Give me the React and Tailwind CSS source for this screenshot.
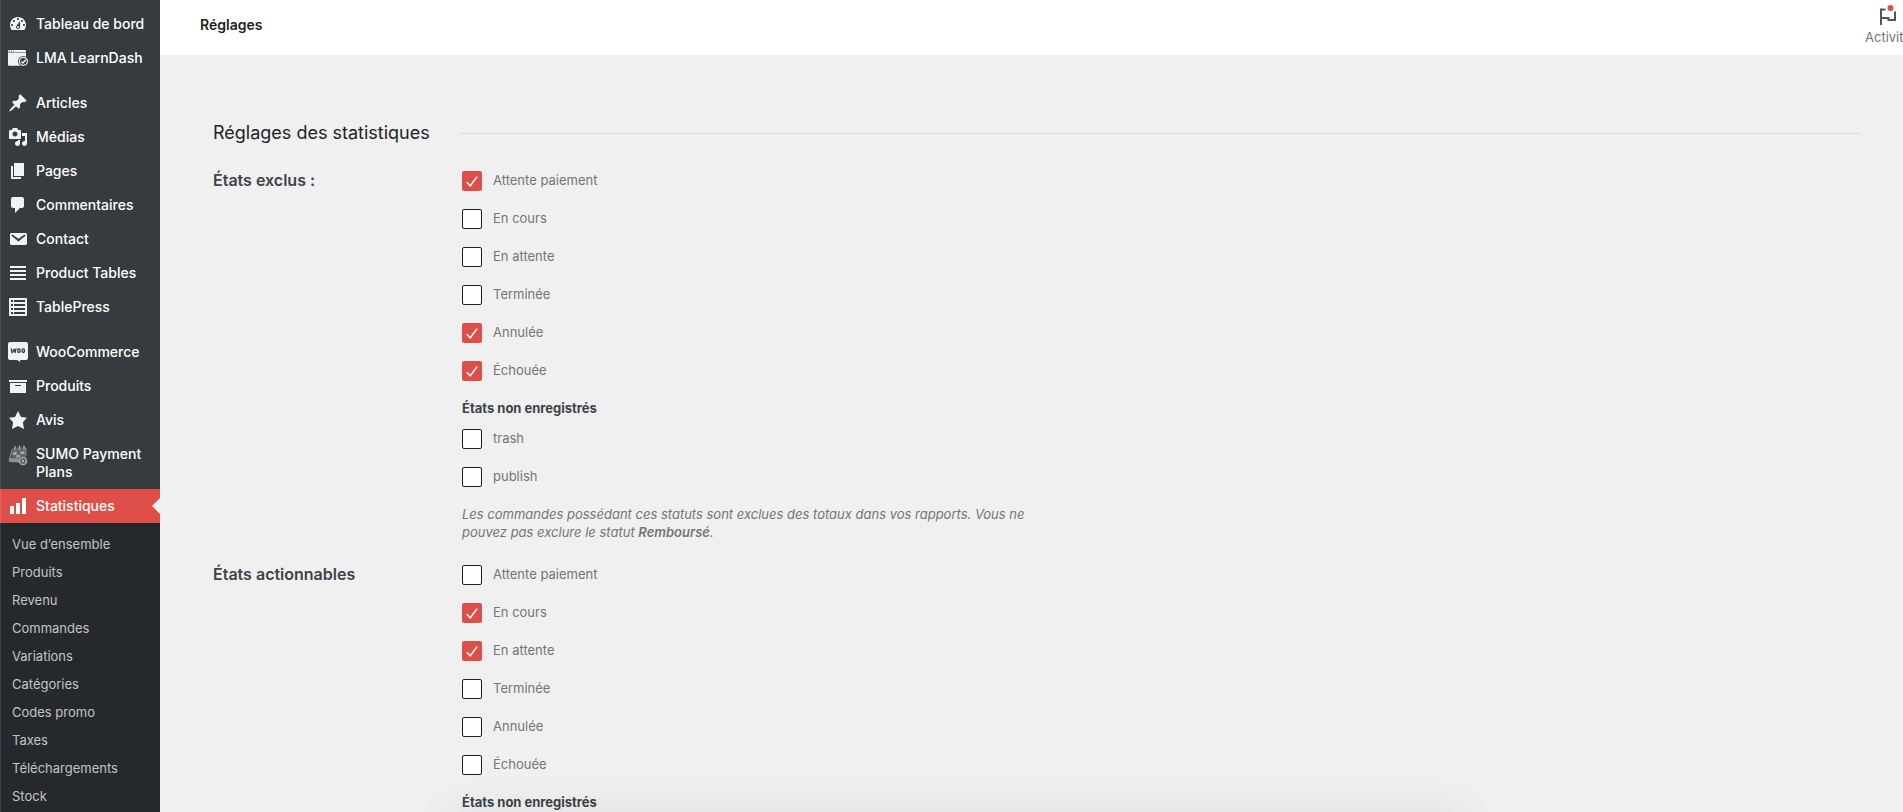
import { useState } from 'react';

const MENU = [
  { label: 'Tableau de bord', icon: 'dashboard' },
  { label: 'LMA LearnDash', icon: 'learndash' },
  { separator: true },
  { label: 'Articles', icon: 'pin' },
  { label: 'Médias', icon: 'media' },
  { label: 'Pages', icon: 'pages' },
  { label: 'Commentaires', icon: 'comments' },
  { label: 'Contact', icon: 'email' },
  { label: 'Product Tables', icon: 'rows' },
  { label: 'TablePress', icon: 'table' },
  { separator: true },
  { label: 'WooCommerce', icon: 'woo' },
  { label: 'Produits', icon: 'archive' },
  { label: 'Avis', icon: 'star' },
  { label: 'SUMO Payment Plans', icon: 'sumo' },
  { label: 'Statistiques', icon: 'chart', active: true },
];

const SUBMENU = [
  'Vue d’ensemble',
  'Produits',
  'Revenu',
  'Commandes',
  'Variations',
  'Catégories',
  'Codes promo',
  'Taxes',
  'Téléchargements',
  'Stock',
];

const STATUSES = ['Attente paiement', 'En cours', 'En attente', 'Terminée', 'Annulée', 'Échouée'];
const UNREGISTERED = ['trash', 'publish'];

const ICONS = {
  dashboard: (
    <path d="M3.76 16h12.48c1.1-1.37 1.76-3.11 1.76-5 0-4.42-3.58-8-8-8s-8 3.58-8 8c0 1.89.66 3.63 1.76 5zM10 4c.55 0 1 .45 1 1s-.45 1-1 1-1-.45-1-1 .45-1 1-1zM6 6c.55 0 1 .45 1 1s-.45 1-1 1-1-.45-1-1 .45-1 1-1zm8 0c.55 0 1 .45 1 1s-.45 1-1 1-1-.45-1-1 .45-1 1-1zm-5.37 5.55L12 7v6c0 1.1-.9 2-2 2s-2-.9-2-2c0-.57.24-1.08.63-1.45zM4 10c.55 0 1 .45 1 1s-.45 1-1 1-1-.45-1-1 .45-1 1-1zm12 0c.55 0 1 .45 1 1s-.45 1-1 1-1-.45-1-1 .45-1 1-1zm-5 3c0-.55-.45-1-1-1s-1 .45-1 1 .45 1 1 1 1-.45 1-1z" />
  ),
  learndash: (
    <>
      <path d="M1 2h16a1 1 0 0 1 1 1v1.4H0V3a1 1 0 0 1 1-1zM0 5h18v11l-4 1.800H1a1 1 0 0 1-1-1z" />
      <circle cx="15.4" cy="13.3" r="5.4" fill="#363b3f" />
      <circle cx="15.4" cy="13.3" r="4" fill="none" stroke="currentColor" strokeWidth="1.2" />
      <path d="M13.4 13.4l1.5 1.5 2.8-3.1" fill="none" stroke="currentColor" strokeWidth="1.4" />
      <path d="M1 3.2h1M3 3.2h1M5 3.2h1" stroke="#363b3f" strokeWidth=".8" />
    </>
  ),
  pin: (
    <path d="M10.44 3.02l1.82-1.82 6.36 6.35-1.83 1.82c-1.05-.68-2.48-.57-3.41.36l-.75.75c-.92.93-1.04 2.35-.35 3.41l-1.83 1.82-2.41-2.41-2.8 2.79c-.42.42-3.38 2.71-3.8 2.29s1.86-3.39 2.28-3.81l2.79-2.79L4.1 9.36l1.83-1.82c1.05.69 2.48.57 3.4-.36l.75-.75c.93-.92 1.05-2.35.36-3.41z" />
  ),
  media: (
    <path d="M13 11V4c0-.55-.45-1-1-1h-1.67L9 1H5L3.67 3H2c-.55 0-1 .45-1 1v7c0 .55.45 1 1 1h10c.55 0 1-.45 1-1zM7 4.5c1.38 0 2.5 1.12 2.5 2.5S8.38 9.5 7 9.5 4.5 8.38 4.5 7 5.62 4.5 7 4.5zM14 6h5v10.5c0 1.38-1.12 2.5-2.5 2.5S14 17.88 14 16.5s1.12-2.5 2.5-2.5c.17 0 .34.02.5.05V9h-3V6zm-4 8.05V13h2v3.5c0 1.38-1.12 2.5-2.5 2.5S7 17.88 7 16.5 8.12 14 9.5 14c.17 0 .34.02.5.05z" />
  ),
  pages: <path d="M6 15V2h10v13H6zm-1 1h8v2H3V5h2v11z" />,
  comments: (
    <path d="M5 2h9c1.1 0 2 .9 2 2v7c0 1.1-.9 2-2 2h-2l-5 5v-5H5c-1.1 0-2-.9-2-2V4c0-1.1.9-2 2-2z" />
  ),
  email: (
    <path d="M3.87 4h13.25C18.37 4 19 4.59 19 5.79v8.42c0 1.19-.63 1.79-1.88 1.79H3.87c-1.25 0-1.88-.6-1.88-1.79V5.79c0-1.2.63-1.79 1.88-1.79zm6.62 8.6l6.74-5.53c.24-.2.43-.66.13-1.07-.29-.41-.82-.42-1.17-.17l-5.7 3.86L4.8 5.83c-.35-.25-.88-.24-1.17.17-.3.41-.11.87.13 1.07z" />
  ),
  rows: <path d="M2 3h16v2H2zM2 7h16v2H2zM2 11h16v2H2zM2 15h16v2H2z" />,
  table: (
    <path d="M2 1h16c.6 0 1 .4 1 1v16c0 .6-.4 1-1 1H2c-.6 0-1-.4-1-1V2c0-.6.4-1 1-1zm1 2v2h2V3zm3 0v2h11V3zM3 7v2h2V7zm3 0v2h11V7zm-3 4v2h2v-2zm3 0v2h11v-2zm-3 4v2h2v-2zm3 0v2h11v-2z" />
  ),
  woo: (
    <>
      <path d="M2 0h16a2 2 0 0 1 2 2v14a2 2 0 0 1-2 2h-6l.4 2-3.4-2H2a2 2 0 0 1-2-2V2a2 2 0 0 1 2-2z" />
      <g fill="none" stroke="#363b3f" strokeWidth="1.3" strokeLinejoin="round">
        <path d="M3.2 6.4l1 4.4 2-3.6.9 3.4q.3-2.6 1.3-4.2" />
        <ellipse cx="11" cy="8.7" rx="1.2" ry="1.8" />
        <ellipse cx="15.3" cy="8.7" rx="1.2" ry="1.8" />
      </g>
    </>
  ),
  archive: <path d="M19 4v2H1V4h18zM2 7h16v10H2V7zm11 3V9H7v1h6z" />,
  star: <path d="M10 1l3 6 6 .75-4.12 4.62L16 19l-6-3-6 3 1.13-6.63L1 7.75 7 7z" />,
  sumo: (
    <>
      <path d="M5 4l13-1v11l-6 3-9-4z" fill="#5d6265" />
      <path d="M7 2v4M11.5 1.5v4M16 1.5v4" stroke="#a9acae" strokeWidth="1.3" />
      <path d="M5.5 8l3.5-.3-.8 3-3.5.2zM12.5 7.5l4-.3v2.6l-4 .4zM8.500 11l3.500-.2v2.500l-4 .2z" fill="#a9acae" />
      <path d="M4.5 5L1.5 14.5l9 .5M18 4v8M9 5.5l4-.3" fill="none" stroke="#8b8f92" strokeWidth="1" />
      <path d="M.5 16L2 14.5l9 .5v3.500L1.500 18z" fill="#8b8f92" />
      <circle cx="15" cy="17" r="3.6" fill="#5d6265" stroke="#a9acae" strokeWidth="1.4" />
      <circle cx="15" cy="17" r="1.2" fill="#a9acae" />
    </>
  ),
  chart: <path d="M18 18V2h-4v16h4zm-6 0V7H8v11h4zm-6 0v-8H2v8h4z" />,
};

function MenuIcon({ name }) {
  return (
    <svg viewBox="0 0 20 20" className="w-5 h-5 shrink-0 overflow-visible" fill="currentColor" aria-hidden="true">
      {ICONS[name]}
    </svg>
  );
}

function MenuItem({ item }) {
  return (
    <a
      href="#"
      className={`relative flex items-start gap-2 px-2 text-sm leading-[18px] font-medium ${
        item.active ? 'bg-[#df4f49] text-white' : 'text-[#f1f2f3]'
      }`}
    >
      <span className="py-[7px]">
        <MenuIcon name={item.icon} />
      </span>
      <span className="py-2 text-white">{item.label}</span>
      {item.active && (
        <span className="absolute right-0 top-1/2 -translate-y-1/2 border-8 border-transparent border-r-[#f0f0f0]" />
      )}
    </a>
  );
}

function Sidebar() {
  return (
    <aside className="relative w-40 shrink-0 bg-[#363b3f] after:absolute after:inset-y-0 after:left-0 after:w-px after:bg-white/10">
      <nav className="pt-[7px]">
        {MENU.map((item, i) =>
          item.separator ? <div key={i} className="h-[11px]" /> : <MenuItem key={item.label} item={item} />
        )}
        <ul className="bg-[#26292c] py-[7px]">
          {SUBMENU.map((label) => (
            <li key={label}>
              <a href="#" className="block px-3 py-[5px] text-[13px] leading-[18px] text-[#c3c4c5]">
                {label}
              </a>
            </li>
          ))}
        </ul>
      </nav>
    </aside>
  );
}

function Header() {
  return (
    <header className="flex h-[55px] justify-between overflow-hidden bg-white pl-10">
      <h1 className="pt-[15px] text-sm leading-5 font-semibold text-[#1e1e1e]">Réglages</h1>
      <button type="button" className="-mr-4 flex w-[62px] shrink-0 flex-col items-center text-[13px] text-[#757575]">
        <svg viewBox="0 0 24 24" className="mt-1 w-6 h-6" aria-hidden="true">
          <path d="M5 21V5.500h4.500M5 14h7.500v2H19V7.500" fill="none" stroke="#50575e" strokeWidth="2" />
          <circle cx="14.500" cy="4" r="3" fill="#df4f49" />
        </svg>
        <span className="leading-[18px]">Activité</span>
      </button>
    </header>
  );
}

function Checkbox({ label, defaultChecked }) {
  const [checked, setChecked] = useState(defaultChecked);

  return (
    <label className="flex w-fit items-start gap-[11px] text-[13px] leading-[18px] text-[#757575]">
      <span className="relative flex">
        <input
          type="checkbox"
          checked={checked}
          onChange={(e) => setChecked(e.target.checked)}
          className="w-5 h-5 appearance-none rounded-xs border border-[#1e1e1e] bg-white checked:border-[#df4f49] checked:bg-[#df4f49]"
        />
        {checked && (
          <svg viewBox="0 0 20 20" className="pointer-events-none absolute inset-0 w-5 h-5" aria-hidden="true">
            <path d="M4.8 11.2l3.5 3.6 6.8-9.2" fill="none" stroke="#fff" strokeWidth="1.5" />
          </svg>
        )}
      </span>
      {label}
    </label>
  );
}

function StatusGroup({ title, checked, children }) {
  return (
    <section className="flex" aria-label={title}>
      <h3 className="w-[249px] shrink-0 text-base leading-[18px] font-semibold text-[#3c434a]">{title}</h3>
      <div className="max-w-[580px]">
        <div className="flex flex-col gap-[18px]">
          {STATUSES.map((s) => (
            <Checkbox key={s} label={s} defaultChecked={checked.includes(s)} />
          ))}
        </div>
        <h4 className="mt-[18px] mb-3 text-[13px] leading-[18px] font-bold text-[#3c434a]">États non enregistrés</h4>
        <div className="flex flex-col gap-[18px]">
          {UNREGISTERED.map((s) => (
            <Checkbox key={s} label={s} defaultChecked={checked.includes(s)} />
          ))}
        </div>
        {children && <p className="mt-[18px] text-[13px] leading-[18px] text-[#757575] italic">{children}</p>}
      </div>
    </section>
  );
}

function App() {
  return (
    <div className="flex h-screen overflow-hidden bg-[#f0f0f0] font-['Inter','Liberation_Sans',sans-serif]">
      <Sidebar />
      <div className="min-w-0 flex-1">
        <Header />
        <main className="pt-16 pr-[43px] pl-[53px]">
          <div className="flex items-center">
            <h2 className="w-[248px] shrink-0 text-lg leading-7 whitespace-nowrap text-[#1d2327]">
              Réglages des statistiques
            </h2>
            <hr className="flex-1 border-[#dcdcde]" />
          </div>
          <div className="flex flex-col gap-6 pt-6">
            <StatusGroup title="États exclus :" checked={['Attente paiement', 'Annulée', 'Échouée']}>
              Les commandes possédant ces statuts sont exclues des totaux dans vos rapports. Vous ne pouvez pas exclure
              le statut <strong className="font-semibold">Remboursé</strong>.
            </StatusGroup>
            <StatusGroup title="États actionnables" checked={['En cours', 'En attente']} />
          </div>
        </main>
      </div>
      <div className="pointer-events-none fixed top-full right-[440px] left-[450px] h-10 shadow-[0_0_40px_rgba(0,0,0,0.08)]" />
    </div>
  );
}

export default App;
